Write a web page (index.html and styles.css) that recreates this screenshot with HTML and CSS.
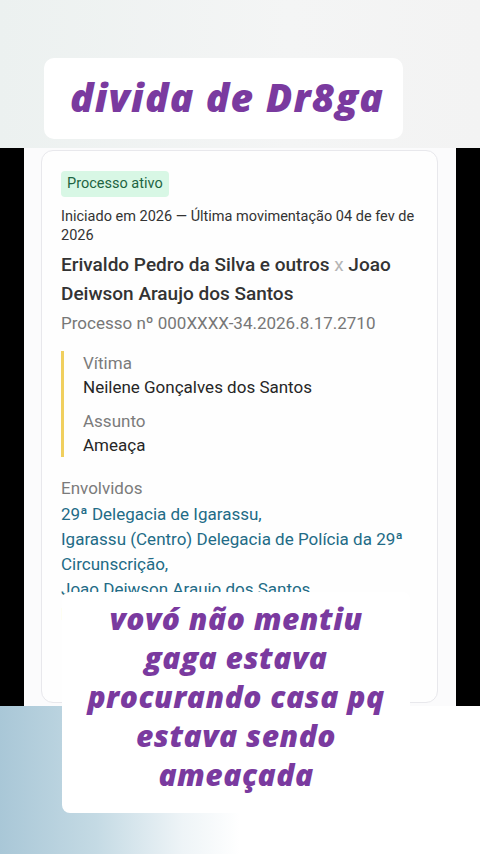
FILE: index.html
```html
<!DOCTYPE html>
<html lang="pt-BR">
<head>
    <meta charset="UTF-8">
    <meta name="viewport" content="width=device-width, initial-scale=1.0">
    <title>divida de Dr8ga</title>
    <link rel="stylesheet" href="styles.css">
</head>
<body>

<div class="top">
    <div class="title-box">
        <h1 class="caption-text">divida de Dr8ga</h1>
    </div>
</div>

<div class="band">
    <div class="frame">
        <div class="card">
            <span class="badge">Processo ativo</span>
            <p class="dates">Iniciado em 2026 — Última movimentação 04 de fev de 2026</p>
            <h2 class="parts">Erivaldo Pedro da Silva e outros <span class="vs">x</span> Joao Deiwson Araujo dos Santos</h2>
            <p class="number">Processo nº 000XXXX-34.2026.8.17.2710</p>

            <div class="details">
                <div class="field">
                    <span class="label">Vítima</span>
                    <span class="value">Neilene Gonçalves dos Santos</span>
                </div>
                <div class="field">
                    <span class="label">Assunto</span>
                    <span class="value">Ameaça</span>
                </div>
            </div>

            <div class="involved">
                <span class="label">Envolvidos</span>
                <a href="#">29ª Delegacia de Igarassu,</a>
                <a href="#">Igarassu (Centro) Delegacia de Polícia da 29ª Circunscrição,</a>
                <a href="#">Joao Deiwson Araujo dos Santos</a>
                <a href="#">Neilene Gonçalves dos Santos</a>
            </div>
        </div>
    </div>
</div>

<div class="bottom"></div>

<div class="overlay">
    <p class="caption-text">vovó não mentiu<br>gaga estava<br>procurando casa pq<br>estava sendo<br>ameaçada</p>
</div>

</body>
</html>
```

FILE: styles.css
```css
body {
    margin: 0;
    font-family: Roboto, "Liberation Sans", sans-serif;
    background: #ffffff;
    position: relative;
    height: 854px;
    overflow: hidden;
}
.top {
    height: 148px;
    padding: 58px 0 0 44px;
    box-sizing: border-box;
    background: linear-gradient(to right, #ecf1f0, #f4f5f5 60%, #f3f3f3);
}
.title-box {
    width: 359px;
    height: 81px;
    background: white;
    border-radius: 10px;
    display: flex;
    align-items: center;
    justify-content: center;
}
.caption-text {
    margin: 0;
    font-family: "Open Sans", sans-serif;
    font-weight: 800;
    font-style: italic;
    color: #7a3a9f;
    text-align: center;
}
.title-box .caption-text {
    font-size: 39px;
    letter-spacing: 1.2px;
    line-height: 48px;
    padding: 0 0 4px 7px;
}
.band {
    height: 558px;
    background: #000;
    padding: 0 24px;
}
.frame {
    height: 100%;
    background: #fbfbfc;
    padding: 2px 18px 0 17px;
    box-sizing: border-box;
    overflow: hidden;
}
.card {
    height: 553px;
    box-sizing: border-box;
    background: #fefefe;
    border: 1px solid #e8e8ec;
    border-radius: 12px;
    padding: 20px 19px 30px;
    color: #2b2b2b;
    overflow: hidden;
}
.badge {
    display: inline-block;
    background: #d8f7e5;
    color: #1d6442;
    font-size: 14.5px;
    line-height: 26px;
    padding: 0 6px;
    border-radius: 4px;
}
.dates {
    margin: 10px 0 0;
    font-size: 14.5px;
    line-height: 19px;
    color: #333;
}
.parts {
    margin: 5px 0 0;
    font-size: 19px;
    font-weight: 500;
    line-height: 29px;
    color: #333;
}
.vs {
    color: #b5b5b5;
    font-weight: 400;
}
.number {
    margin: 3px 0 0;
    font-size: 17px;
    line-height: 24px;
    color: #777;
}
.details {
    margin-top: 16px;
    border-left: 3px solid #f0cf5e;
    padding-left: 19px;
    display: flex;
    flex-direction: column;
    gap: 10px;
}
.field {
    display: flex;
    flex-direction: column;
}
.label {
    font-size: 17px;
    line-height: 24px;
    color: #7b7b7b;
}
.value {
    font-size: 17px;
    line-height: 24px;
    color: #262626;
}
.involved {
    margin-top: 19px;
    display: flex;
    flex-direction: column;
}
.involved .label {
    margin-bottom: 2px;
}
.involved a {
    font-size: 17px;
    line-height: 25px;
    color: #226b86;
    text-decoration: none;
}
.bottom {
    height: 148px;
    background: linear-gradient(to right, #a9c7d7 0%, #c4dae4 20%, #eef4f7 38%, #ffffff 50%);
}
.overlay {
    position: absolute;
    left: 62px;
    top: 592px;
    width: 348px;
    height: 221px;
    box-sizing: border-box;
    padding-top: 7px;
    background: white;
    border-radius: 8px;
}
.overlay .caption-text {
    font-size: 30px;
    line-height: 39px;
    letter-spacing: 0.5px;
}
```
